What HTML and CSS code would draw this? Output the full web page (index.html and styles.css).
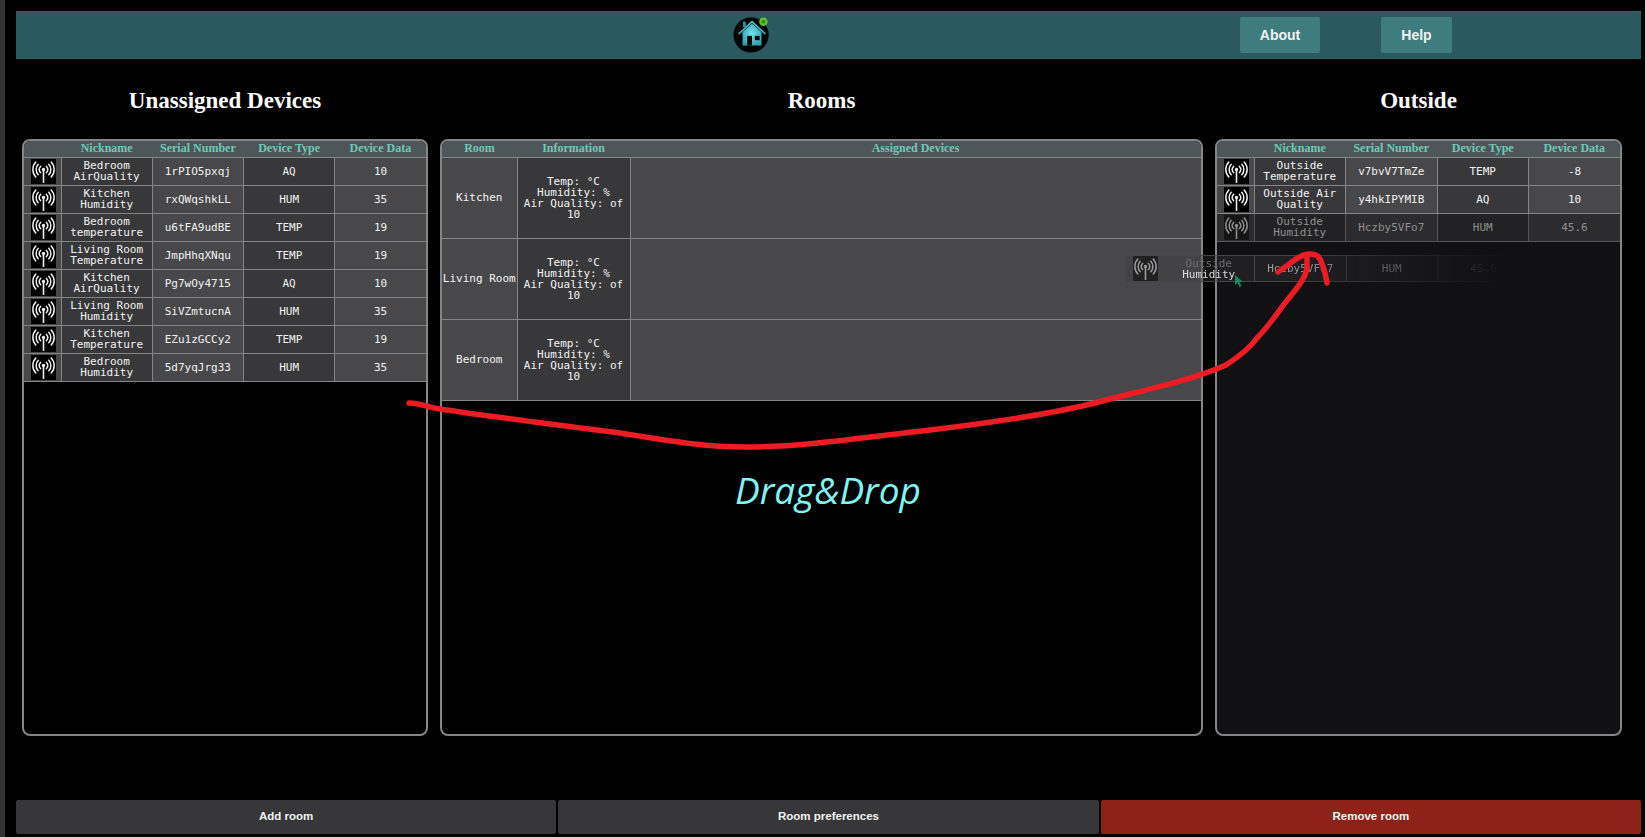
FILE: index.html
```html
<!DOCTYPE html>
<html lang="en">
  <head>
    <meta charset="UTF-8" />
    <meta name="viewport" content="width=device-width, initial-scale=1.0" />
    <title>Smart Home</title>
    <link rel="stylesheet" href="styles.css">
  </head>
  <body>
    <svg class="defs" width="0" height="0">
      <symbol id="antenna" viewBox="0 0 25 25">
        <rect width="25" height="25" fill="#000" />
        <g fill="none" stroke="#eee" stroke-linecap="round" stroke-width="1.5">
          <path d="M9.6 7.4a4.6 4.6 0 0 0 0 6.2M15.4 7.4a4.6 4.6 0 0 1 0 6.2" />
          <path d="M7.2 5.2a7.8 7.8 0 0 0 0 10.6M17.8 5.2a7.8 7.8 0 0 1 0 10.6" />
          <path d="M4.8 3a11 11 0 0 0 0 15M20.2 3a11 11 0 0 1 0 15" />
        </g>
        <circle cx="12.5" cy="10.5" r="1.7" fill="#eee" />
        <rect x="11.7" y="10.5" width="1.6" height="13.5" fill="#eee" />
      </symbol>
    </svg>

    <header class="topbar">
      <svg class="logo" viewBox="0 0 40 40" width="38" height="38">
        <defs>
          <radialGradient id="houseFill" cx="50%" cy="45%" r="60%">
            <stop offset="0%" stop-color="#6fe3ea" />
            <stop offset="100%" stop-color="#2f9fae" />
          </radialGradient>
        </defs>
        <circle cx="19" cy="21" r="18.5" fill="#000" />
        <path d="M10 18 20 9l10 9v14H10z" fill="url(#houseFill)" />
        <path d="M6 20 20 7l14 13" fill="none" stroke="#4fc3cf" stroke-width="1.6" />
        <rect x="10.500" y="7" width="3" height="6" fill="#2f8f9c" />
        <rect x="15" y="22" width="5" height="10" fill="#000" />
        <rect x="23" y="22" width="5" height="4.500" fill="#000" />
        <circle cx="32" cy="7" r="4.500" fill="#5fbf2f" />
        <circle cx="32" cy="7" r="2" fill="#2f8f1f" />
      </svg>
      <button class="nav-btn about">About</button>
      <button class="nav-btn help">Help</button>
    </header>

    <main class="columns">
      <section class="column">
        <h2>Unassigned Devices</h2>
        <div class="panel">
          <table class="devices">
            <thead>
              <tr><th></th><th>Nickname</th><th>Serial Number</th><th>Device Type</th><th>Device Data</th></tr>
            </thead>
            <tbody>
              <tr><td class="icon"><svg><use href="#antenna" /></svg></td><td>Bedroom AirQuality</td><td>1rPIO5pxqj</td><td>AQ</td><td>10</td></tr>
              <tr><td class="icon"><svg><use href="#antenna" /></svg></td><td>Kitchen Humidity</td><td>rxQWqshkLL</td><td>HUM</td><td>35</td></tr>
              <tr><td class="icon"><svg><use href="#antenna" /></svg></td><td>Bedroom temperature</td><td>u6tFA9udBE</td><td>TEMP</td><td>19</td></tr>
              <tr><td class="icon"><svg><use href="#antenna" /></svg></td><td>Living Room Temperature</td><td>JmpHhqXNqu</td><td>TEMP</td><td>19</td></tr>
              <tr><td class="icon"><svg><use href="#antenna" /></svg></td><td>Kitchen AirQuality</td><td>Pg7wOy4715</td><td>AQ</td><td>10</td></tr>
              <tr><td class="icon"><svg><use href="#antenna" /></svg></td><td>Living Room Humidity</td><td>SiVZmtucnA</td><td>HUM</td><td>35</td></tr>
              <tr><td class="icon"><svg><use href="#antenna" /></svg></td><td>Kitchen Temperature</td><td>EZu1zGCCy2</td><td>TEMP</td><td>19</td></tr>
              <tr><td class="icon"><svg><use href="#antenna" /></svg></td><td>Bedroom Humidity</td><td>5d7yqJrg33</td><td>HUM</td><td>35</td></tr>
            </tbody>
          </table>
        </div>
      </section>

      <section class="column column-rooms">
        <h2>Rooms</h2>
        <div class="panel">
          <table class="rooms">
            <thead>
              <tr><th>Room</th><th>Information</th><th>Assigned Devices</th></tr>
            </thead>
            <tbody>
              <tr><td>Kitchen</td><td>Temp: °C<br>Humidity: %<br>Air Quality: of 10</td><td></td></tr>
              <tr><td>Living Room</td><td>Temp: °C<br>Humidity: %<br>Air Quality: of 10</td><td></td></tr>
              <tr><td>Bedroom</td><td>Temp: °C<br>Humidity: %<br>Air Quality: of 10</td><td></td></tr>
            </tbody>
          </table>
        </div>
      </section>

      <section class="column">
        <h2>Outside</h2>
        <div class="panel panel-target">
          <table class="devices">
            <thead>
              <tr><th></th><th>Nickname</th><th>Serial Number</th><th>Device Type</th><th>Device Data</th></tr>
            </thead>
            <tbody>
              <tr><td class="icon"><svg><use href="#antenna" /></svg></td><td>Outside Temperature</td><td>v7bvV7TmZe</td><td>TEMP</td><td>-8</td></tr>
              <tr><td class="icon"><svg><use href="#antenna" /></svg></td><td>Outside Air Quality</td><td>y4hkIPYMIB</td><td>AQ</td><td>10</td></tr>
              <tr class="dragging"><td class="icon"><svg><use href="#antenna" /></svg></td><td>Outside Humidity</td><td>Hczby5VFo7</td><td>HUM</td><td>45.6</td></tr>
            </tbody>
          </table>
        </div>
      </section>
    </main>

    <footer class="actions">
      <button class="action">Add room</button>
      <button class="action">Room preferences</button>
      <button class="action action-danger">Remove room</button>
    </footer>

    <!-- drag preview and the hand drawn note on top of the page -->
    <table class="devices ghost">
      <tr><td class="icon"><svg><use href="#antenna" /></svg></td><td><span class="ghost-dim">Outside</span> <span class="ghost-bright">Humidity</span></td><td>Hczby5VFo7</td><td>HUM</td><td>45.6</td></tr>
    </table>
    <svg class="scribble" width="1645" height="837" viewBox="0 0 1645 837">
      <path d="M409 403C416 402 425 407 440 409C500 418 560 425 620 433C660 439 700 447 745 447C800 447 860 438 930 430C990 423 1060 413 1110 399C1150 389 1195 379 1226 365C1240 356 1250 348 1257 338C1267 328 1277 314 1285 303C1295 290 1305 280 1307 268C1307 264 1307 260 1307 255" />
      <path d="M1278 272C1288 266 1298 255 1308 254C1318 253 1320 258 1322 264C1325 271 1326 277 1327 283" />
    </svg>
    <svg class="cursor" width="9" height="12" viewBox="0 0 9 12">
      <path d="M0 0v10l2.500-2.200L4.500 12l2-1-2-4H8z" fill="#0f8a5a" />
    </svg>
    <div class="note">Drag&amp;Drop</div>
  </body>
</html>
```

FILE: styles.css
```css
* {
  box-sizing: border-box;
}

html {
  background: #000;
}

body {
  margin: 0;
  height: 837px;
  position: relative;
  overflow: hidden;
  background: #000;
  border-left: 5px solid #333;
  padding: 11px 4px 0 11px;
  display: flex;
  flex-direction: column;
}

.defs {
  position: absolute;
}

/* top bar */
.topbar {
  height: 48px;
  flex: none;
  display: flex;
  align-items: center;
  background: #2b5a5e;
  border-top: 1px solid #2f6468;
  border-bottom: 1px solid #2f6468;
}

.logo {
  margin-left: 717px;
  margin-top: -2px;
}

.nav-btn {
  height: 36px;
  border: 0;
  border-radius: 2px;
  background: #3e7c7d;
  color: #f2f2f2;
  font: bold 14px "Liberation Sans", sans-serif;
}

.about {
  width: 80px;
  margin-left: auto;
}

.help {
  width: 71px;
  margin-left: 61px;
  margin-right: 189px;
}

/* columns */
.columns {
  flex: none;
  display: flex;
  gap: 12px;
  padding-left: 6px;
}

.column {
  width: 406px;
}

.column-rooms {
  width: 763px;
}

.column:last-child {
  width: 407px;
}

h2 {
  margin: 0;
  height: 80px;
  text-align: center;
  color: #fff;
  font: bold 23px/83px "Liberation Serif", serif;
}

.panel {
  height: 597px;
  border: 2px solid #858585;
  border-radius: 8px;
  background: #000;
  overflow: hidden;
}

.panel-target {
  background: #111114;
}

/* tables */
table {
  width: 100%;
  table-layout: fixed;
  border-collapse: collapse;
  color: #f2f2f2;
  font: 11px/11px "DejaVu Sans Mono", monospace;
  text-align: center;
}

th {
  height: 16px;
  padding: 0;
  background: #4f5659;
  color: #6ccab6;
  font: bold 12px/15px "Liberation Serif", serif;
  border-bottom: 1px solid #858585;
}

td {
  padding: 0;
  border: 1px solid #858585;
  background: #48484a;
}

td:nth-child(even) {
  background: #38383a;
}

tr td:first-child {
  border-left: 0;
}

tr td:last-child {
  border-right: 0;
}

.devices th:first-child,
.devices td:first-child {
  width: 37px;
}

.devices td {
  height: 28px;
}

.icon {
  padding-left: 2px;
}

.icon svg {
  display: block;
  width: 25px;
  height: 25px;
  margin: 0 auto;
}

.rooms th:first-child {
  width: 75px;
}

.rooms th:nth-child(2) {
  width: 113px;
}

.rooms td {
  height: 81px;
}

.rooms td:nth-child(2) {
  padding: 0 4px;
}

.dragging td {
  color: #8f8f8f;
  background: #2c2c2e;
  border-color: #555;
}

.dragging td:nth-child(even) {
  background: #222224;
}

.dragging .icon svg {
  opacity: 0.5;
}

/* overlays */
.ghost {
  position: absolute;
  left: 1121px;
  top: 255px;
  width: 403px;
  -webkit-mask-image: linear-gradient(to right, #000 40%, transparent 95%);
  mask-image: linear-gradient(to right, #000 40%, transparent 95%);
  color: #9a9a9a;
}

.ghost td,
.ghost td:nth-child(even) {
  height: 26px;
  background: rgba(60, 60, 62, 0.35);
  border-color: #444;
}

.ghost .icon svg {
  opacity: 0.5;
}

.ghost-dim {
  color: #6f6f6f;
}

.ghost-bright {
  color: #d8d8d8;
}

.scribble {
  position: absolute;
  left: -5px;
  top: 0;
  pointer-events: none;
}

.scribble path {
  fill: none;
  stroke: #ed1c24;
  stroke-width: 5.500;
  stroke-linecap: round;
  stroke-linejoin: round;
}

.cursor {
  position: absolute;
  left: 1230px;
  top: 275px;
}

.note {
  position: absolute;
  left: 730px;
  top: 464px;
  color: #7ff6f3;
  font: italic 37px "Open Sans", sans-serif;
  white-space: nowrap;
}

/* bottom buttons */
.actions {
  flex: none;
  display: flex;
  gap: 2px;
  margin-top: 64px;
}

.action {
  flex: 1;
  height: 34px;
  padding-bottom: 3px;
  border: 0;
  border-radius: 2px;
  background: #37373a;
  color: #f2f2f2;
  font: bold 11.5px "Liberation Sans", sans-serif;
}

.action-danger {
  background: #8e2219;
}
```
